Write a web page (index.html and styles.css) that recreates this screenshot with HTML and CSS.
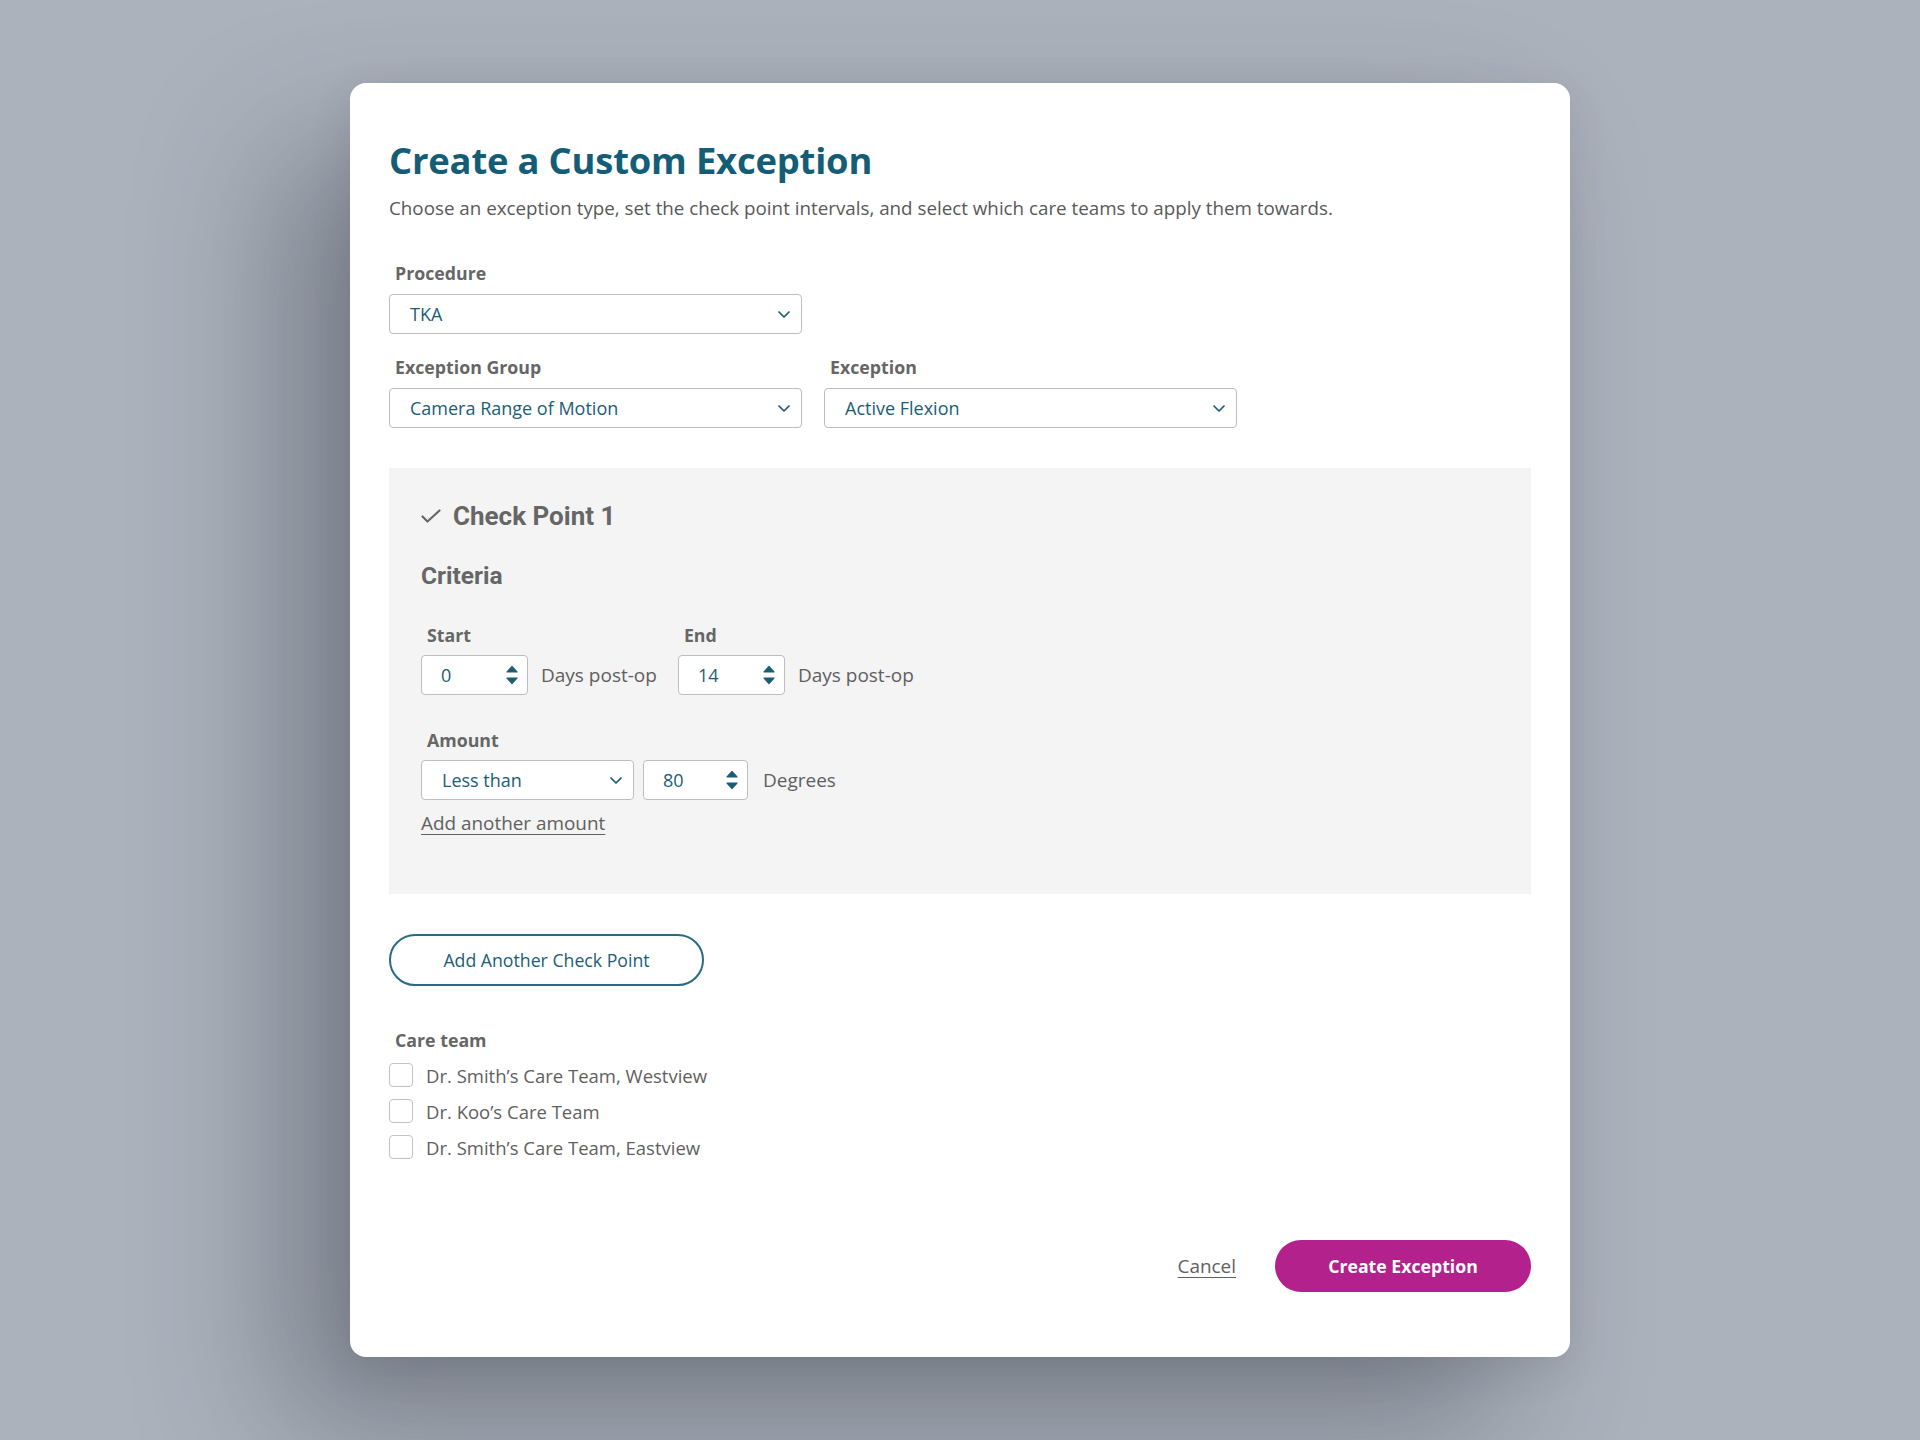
FILE: index.html
```html
<!DOCTYPE html>
<html lang="en">
<head>
<meta charset="utf-8">
<title>Create a Custom Exception</title>
<link rel="stylesheet" href="styles.css">
</head>
<body>
<div class="modal">
  <h1 class="title">Create a Custom Exception</h1>
  <p class="subtitle">Choose an exception type, set the check point intervals, and select which care teams to apply them towards.</p>

  <div class="field field-first">
    <div class="label">Procedure</div>
    <div class="select wide"><span>TKA</span><svg class="chev" viewBox="0 0 12 7"><path d="M1 1l5 5 5-5"/></svg></div>
  </div>

  <div class="row">
    <div class="field">
      <div class="label">Exception Group</div>
      <div class="select wide"><span>Camera Range of Motion</span><svg class="chev" viewBox="0 0 12 7"><path d="M1 1l5 5 5-5"/></svg></div>
    </div>
    <div class="field">
      <div class="label">Exception</div>
      <div class="select wide"><span>Active Flexion</span><svg class="chev" viewBox="0 0 12 7"><path d="M1 1l5 5 5-5"/></svg></div>
    </div>
  </div>

  <section class="checkpoint">
    <h2 class="cp-title"><svg class="check" viewBox="0 0 20 14"><path d="M1.5 7.5l5 5 12-11"/></svg>Check Point 1</h2>
    <h3 class="criteria">Criteria</h3>

    <div class="range-row">
      <div class="range-group">
        <div class="label">Start</div>
        <div class="inline">
          <div class="num"><span>0</span><svg class="spin" viewBox="0 0 12 20"><path d="M6 1.5l5 5.5H1z"/><path d="M6 18.5l5-5.5H1z"/></svg></div>
          <span class="suffix">Days post-op</span>
        </div>
      </div>
      <div class="range-group">
        <div class="label">End</div>
        <div class="inline">
          <div class="num"><span>14</span><svg class="spin" viewBox="0 0 12 20"><path d="M6 1.5l5 5.5H1z"/><path d="M6 18.5l5-5.5H1z"/></svg></div>
          <span class="suffix">Days post-op</span>
        </div>
      </div>
    </div>

    <div class="amount">
      <div class="label">Amount</div>
      <div class="inline amount-inline">
        <div class="select small"><span>Less than</span><svg class="chev" viewBox="0 0 12 7"><path d="M1 1l5 5 5-5"/></svg></div>
        <div class="num"><span>80</span><svg class="spin" viewBox="0 0 12 20"><path d="M6 1.5l5 5.5H1z"/><path d="M6 18.5l5-5.5H1z"/></svg></div>
        <span class="suffix">Degrees</span>
      </div>
      <a class="link add-amount" href="#">Add another amount</a>
    </div>
  </section>

  <button class="btn-outline" type="button">Add Another Check Point</button>

  <div class="care">
    <div class="label">Care team</div>
    <label class="cb-row"><span class="cb"></span>Dr. Smith’s Care Team, Westview</label>
    <label class="cb-row"><span class="cb"></span>Dr. Koo’s Care Team</label>
    <label class="cb-row"><span class="cb"></span>Dr. Smith’s Care Team, Eastview</label>
  </div>

  <div class="footer">
    <a class="link cancel" href="#">Cancel</a>
    <button class="btn-primary" type="button">Create Exception</button>
  </div>
</div>
</body>
</html>
```

FILE: styles.css
```css
* { box-sizing: border-box; }

html, body {
  margin: 0;
  padding: 0;
}

body {
  min-height: 1440px;
  background: #acb2bc;
  display: flex;
  align-items: center;
  justify-content: center;
  font-family: "Open Sans", "Noto Sans", sans-serif;
  color: #5a5a5a;
}

.modal {
  width: 1220px;
  height: 1274px;
  background: #ffffff;
  border-radius: 16px;
  padding: 53px 39px 0 39px;
  box-shadow: -70px 70px 140px rgba(40, 46, 58, 0.38), 0 10px 40px rgba(40, 46, 58, 0.12);
}

.title {
  margin: 0;
  font-size: 36.4px;
  line-height: 48px;
  font-weight: 700;
  color: #135d77;
  letter-spacing: -0.2px;
}

.subtitle {
  margin: 11px 0 0;
  font-size: 18.8px;
  line-height: 26px;
  color: #595959;
}

.label {
  font-size: 17.75px;
  line-height: 24px;
  font-weight: 700;
  color: #666666;
  padding-left: 6px;
  margin-bottom: 9px;
}

.field-first { margin-top: 40px; }

.row {
  display: flex;
  gap: 22px;
  margin-top: 21px;
}

.select {
  height: 40px;
  border: 1px solid #bdbdbd;
  border-radius: 4px;
  background: #fff;
  display: flex;
  align-items: center;
  justify-content: space-between;
  padding: 0 11px 0 20px;
  font-size: 18px;
  color: #1c5d76;
}

.select.wide { width: 413px; }
.select.small { width: 213px; }

.chev {
  width: 12px;
  height: 7px;
  fill: none;
  stroke: #1c5d76;
  stroke-width: 1.7;
  stroke-linecap: round;
  stroke-linejoin: round;
}

.checkpoint {
  margin-top: 40px;
  background: #f4f4f4;
  padding: 32px 32px 58px;
}

.cp-title {
  margin: 0;
  display: flex;
  align-items: center;
  gap: 12px;
  font-family: Roboto, "Liberation Sans", sans-serif;
  font-size: 26px;
  line-height: 32px;
  font-weight: 700;
  color: #666666;
}

.check {
  width: 20px;
  height: 14px;
  fill: none;
  stroke: #666666;
  stroke-width: 2.2;
  stroke-linecap: round;
  stroke-linejoin: round;
}

.criteria {
  margin: 29px 0 0;
  font-family: Roboto, "Liberation Sans", sans-serif;
  font-size: 24.5px;
  line-height: 30px;
  font-weight: 700;
  color: #666666;
}

.range-row {
  display: flex;
  gap: 21px;
  margin-top: 32px;
}

.range-row .label { margin-bottom: 8px; }

.inline {
  display: flex;
  align-items: center;
  gap: 13px;
}

.num {
  width: 107px;
  height: 40px;
  border: 1px solid #bdbdbd;
  border-radius: 4px;
  background: #fff;
  display: flex;
  align-items: center;
  justify-content: space-between;
  padding: 0 9px 0 19px;
  font-size: 18px;
  color: #1c5d76;
}

.spin {
  width: 12px;
  height: 20px;
  fill: #1c5d76;
  stroke: #1c5d76;
  stroke-width: 1.2;
  stroke-linejoin: round;
}

.suffix {
  font-size: 19px;
  color: #5f5f5f;
}

.amount { margin-top: 33px; }

.amount .label { margin-bottom: 8px; }

.amount-inline { gap: 9px; }
.amount-inline .num { width: 105px; }
.amount-inline .suffix { margin-left: 6px; }

.link {
  color: #606060;
  text-decoration: underline;
  text-underline-offset: 4px;
  text-decoration-thickness: 1px;
  font-size: 18.9px;
}

.add-amount {
  display: inline-block;
  margin-top: 10px;
  line-height: 26px;
}

.btn-outline {
  display: block;
  margin-top: 40px;
  width: 315px;
  height: 52px;
  border: 2px solid #2a6a82;
  border-radius: 26px;
  background: #fff;
  font-family: "Open Sans", "Noto Sans", sans-serif;
  font-size: 17.7px;
  color: #1c5d76;
}

.care {
  margin-top: 42px;
}

.care .label { margin-bottom: 5px; }

.cb-row {
  display: flex;
  align-items: center;
  gap: 13px;
  height: 36px;
  font-size: 18.5px;
  color: #5f5f5f;
}

.cb {
  width: 24px;
  height: 24px;
  border: 1.5px solid #c2c2c2;
  border-radius: 4px;
  background: #fff;
}

.footer {
  display: flex;
  justify-content: flex-end;
  align-items: center;
  gap: 39px;
  margin-top: 75px;
}

.cancel { font-size: 18.9px; }

.btn-primary {
  width: 256px;
  height: 52px;
  border: none;
  border-radius: 26px;
  background: #b3218d;
  color: #ffffff;
  font-family: "Open Sans", "Noto Sans", sans-serif;
  font-size: 17.7px;
  font-weight: 700;
}
```
